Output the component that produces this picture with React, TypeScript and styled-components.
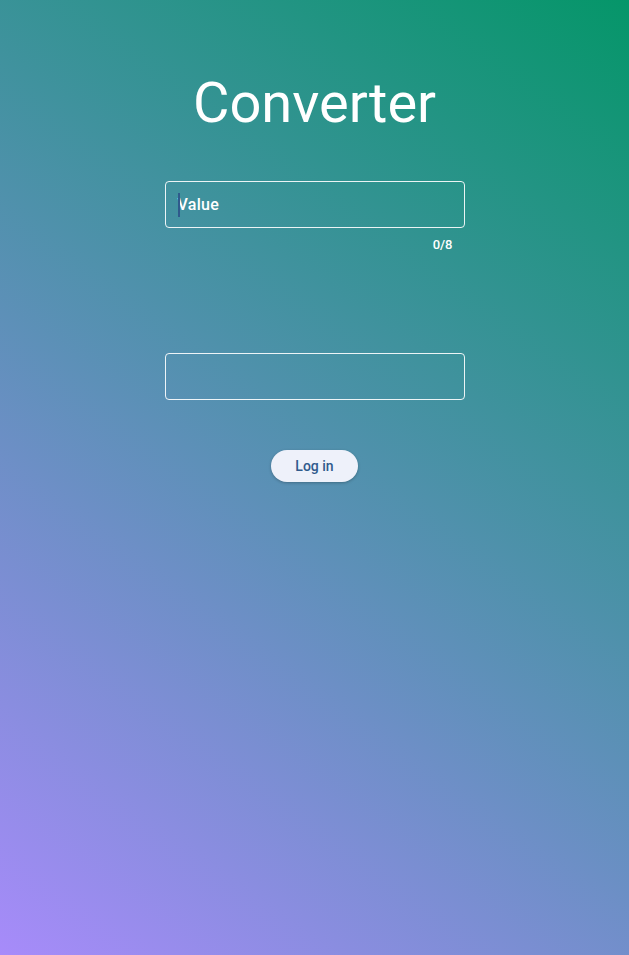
import React from "react";
import styled, { createGlobalStyle } from "styled-components";

const GlobalStyle = createGlobalStyle`
  html, body { margin: 0; padding: 0; }
  body { font-family: Roboto, "Liberation Sans", sans-serif; }
`;

const Page = styled.main`
  box-sizing: border-box;
  width: 100%;
  min-height: 955px;
  background: linear-gradient(36deg, #a78bfa, #059669);
  display: flex;
  flex-direction: column;
  align-items: center;
  padding-top: 67px;
`;

const Title = styled.h1`
  margin: 0;
  font-family: Roboto, "Liberation Sans", sans-serif;
  font-weight: 400;
  font-size: 56px;
  line-height: 72px;
  color: #ffffff;
`;

const Form = styled.form`
  display: flex;
  flex-direction: column;
  align-items: center;
  margin-top: 42px;
  width: 300px;
`;

const FieldGroup = styled.div<{ $gap: number }>`
  width: 100%;
  margin-bottom: ${(p) => p.$gap}px;
`;

const Field = styled.div`
  position: relative;
  box-sizing: border-box;
  width: 100%;
  height: 47px;
  border: 1px solid rgba(255, 255, 255, 0.9);
  border-radius: 4px;
  display: flex;
  align-items: center;
  padding-left: 12px;
`;

const Label = styled.span`
  font-size: 16px;
  color: #ffffff;
  font-weight: 500;
  letter-spacing: 0.3px;
`;

const Caret = styled.span`
  position: absolute;
  left: 12px;
  top: 11px;
  width: 2px;
  height: 24px;
  background: #2f5a8c;
`;

const Counter = styled.div`
  text-align: right;
  padding-right: 12px;
  margin-top: 10px;
  font-size: 13px;
  font-weight: 500;
  color: #ffffff;
  line-height: 14px;
`;

const Button = styled.button`
  height: 32px;
  padding: 0 24px;
  border: none;
  border-radius: 16px;
  background: #eef1fa;
  color: #2f5a8c;
  font-family: Roboto, "Liberation Sans", sans-serif;
  font-weight: 500;
  font-size: 14px;
  box-shadow: 0 1px 3px rgba(0, 0, 0, 0.25);
  cursor: pointer;
`;

export default function App() {
  return (
    <>
      <GlobalStyle />
      <Page>
        <Title>Converter</Title>
        <Form onSubmit={(e) => e.preventDefault()}>
          <FieldGroup $gap={101}>
            <Field>
              <Caret />
              <Label>Value</Label>
            </Field>
            <Counter>0/8</Counter>
          </FieldGroup>
          <FieldGroup $gap={50}>
            <Field />
          </FieldGroup>
          <Button type="submit">Log in</Button>
        </Form>
      </Page>
    </>
  );
}
